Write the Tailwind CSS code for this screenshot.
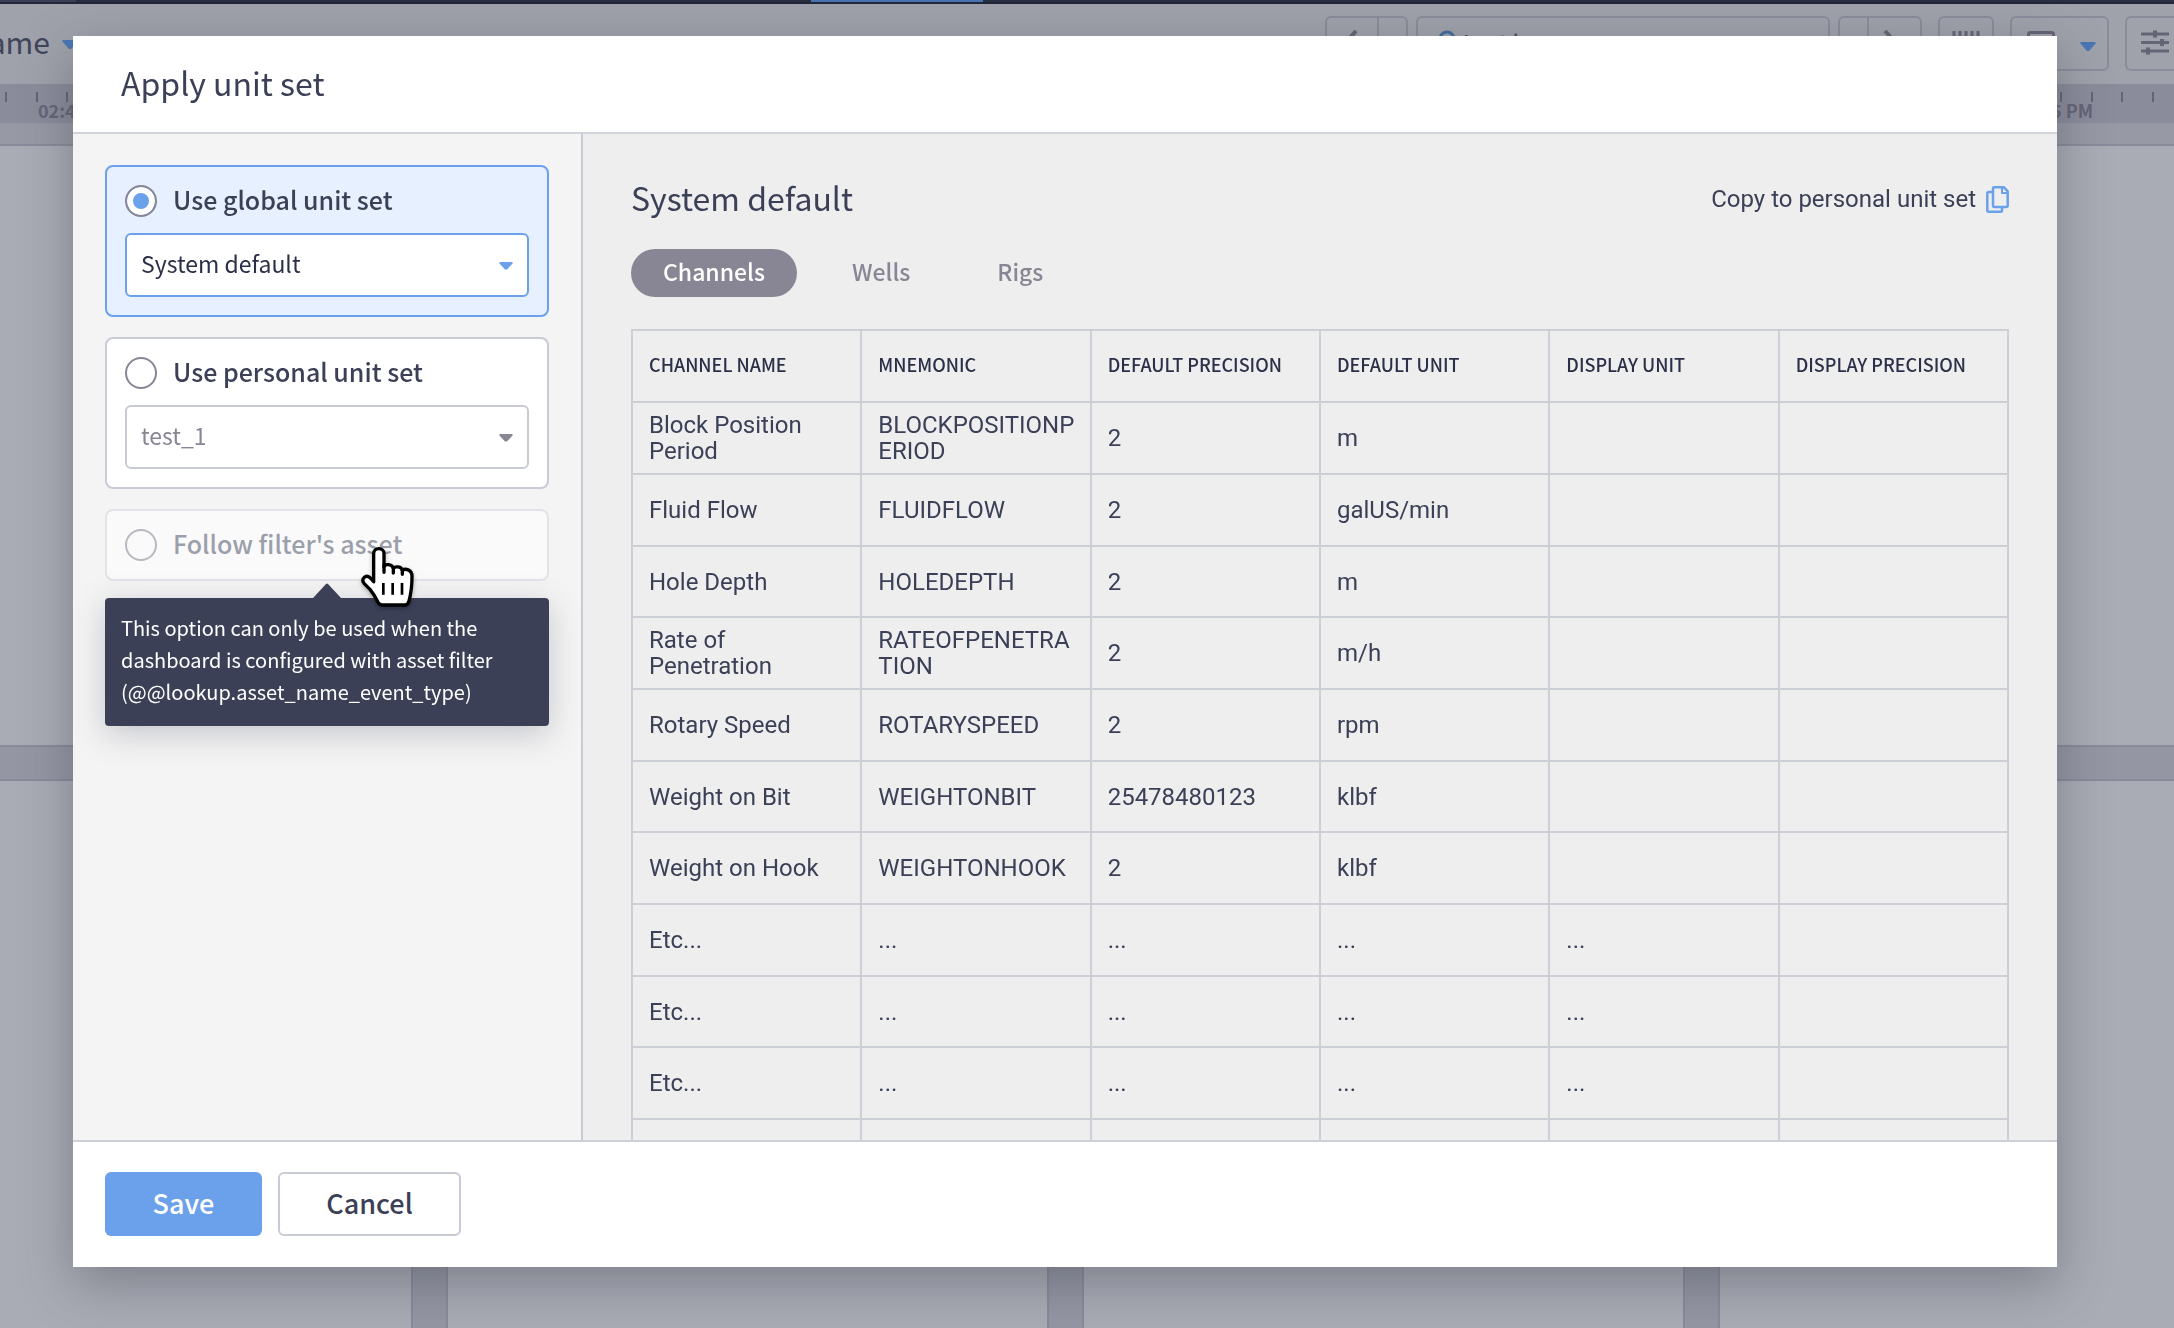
<!DOCTYPE html>
<html lang="en">
<head>
<meta charset="utf-8">
<title>Apply unit set</title>
<script src="https://cdn.jsdelivr.net/npm/@tailwindcss/browser@4"></script>
</head>
<body class="h-screen overflow-hidden bg-[#a9acb5] font-['Noto_Sans_CJK_SC',sans-serif] text-[#3b4057]">

<!-- Dimmed dashboard -->
<div class="flex h-screen flex-col" aria-hidden="true">
  <div class="flex h-1 shrink-0 border-b-2 border-[#23273c] bg-[#283040]">
    <div class="w-[76px] bg-[#3a4056]"></div>
    <div class="ml-[735px] w-[172px] bg-[#4a74b0]"></div>
  </div>
  <div class="flex h-20 shrink-0 items-start overflow-hidden bg-[#9fa2aa] pt-3 text-[#646476]">
    <div class="flex w-[50px] justify-end text-[30px] leading-[50px] whitespace-nowrap text-[#3f455a]">Dashboard name</div>
    <svg class="mt-6 ml-3 h-[9px] w-4 shrink-0" viewBox="0 0 16 9" fill="#4a76b4"><path d="M1 0h14l1 1-7 8H7L0 1z"/></svg>
    <div class="ml-auto flex h-[55px] shrink-0">
      <div class="flex w-[83px] rounded-md border-2 border-[#8a8c9b]">
        <div class="flex w-[52px] justify-center border-r-2 border-[#8a8c9b] pt-3"><svg class="h-6 w-6" viewBox="0 0 24 24" fill="none" stroke="currentColor" stroke-width="4"><path d="M16 1 6 12l10 11"/></svg></div>
      </div>
      <div class="ml-2 flex w-[414px] rounded-md border-2 border-[#8a8c9b] pl-[21px] text-[23px] leading-[48px]">
        <svg class="mt-3 mr-2 h-6 w-4" viewBox="0 0 16 24" fill="none" stroke="#3f6c9e" stroke-width="3"><circle cx="8" cy="9" r="7"/></svg>
        <span class="text-[#3f455a]">Last hour</span>
      </div>
      <div class="ml-2 flex w-[84px] rounded-md border-2 border-[#8a8c9b]">
        <div class="w-[29px] border-r-2 border-[#8a8c9b]"></div>
        <svg class="mt-3 ml-2 h-6 w-6" viewBox="0 0 24 24" fill="none" stroke="currentColor" stroke-width="4"><path d="m8 1 10 11L8 23"/></svg>
      </div>
      <div class="ml-4 flex w-14 justify-center rounded-md border-2 border-[#8a8c9b] pt-[13px]"><svg class="h-6 w-7" viewBox="0 0 28 24" stroke="currentColor" stroke-width="3"><path d="M2 0v20M8 0v20M14 0v20M20 0v20M26 0v20"/></svg></div>
      <div class="ml-4 flex w-[99px] justify-between rounded-md border-2 border-[#8a8c9b] pr-[11px] pl-[15px]">
        <svg class="mt-[13px] h-6 w-7" viewBox="0 0 28 24" fill="none" stroke="currentColor" stroke-width="3"><rect x="1.500" y="1.500" width="25" height="18" rx="2"/></svg>
        <svg class="mt-6 h-[9px] w-4" viewBox="0 0 16 9" fill="#4a76b4"><path d="M1 0h14l1 1-7 8H7L0 1z"/></svg>
      </div>
      <div class="ml-4 flex w-[49px] rounded-l-md border-2 border-r-0 border-[#8a8c9b] pt-3 pl-[14px]"><svg class="h-[25px] w-7 shrink-0" viewBox="0 0 28 25" stroke="currentColor" stroke-width="3"><path d="M0 4h28M0 12.500h28M0 21h28"/><path stroke-width="4" d="M14 0.500v7M21 9v7M7 17.500v7"/></svg></div>
    </div>
  </div>
  <div class="h-[39px] shrink-0 overflow-hidden bg-[#8a8c9b] pt-2 text-[#646476]">
    <div id="ticks" class="flex justify-between pr-[19px] pl-[5px]"></div>
    <div class="flex justify-between pr-[81px] pl-[38px] text-[18px] leading-4 font-bold"><span>02:45 PM</span><span>03:15 PM</span></div>
  </div>
  <div class="h-[23px] shrink-0 border-b-2 border-[#898b9b] bg-[#979aa5]"></div>
  <div class="h-[599px] shrink-0"></div>
  <div class="h-9 shrink-0 border-y-2 border-[#898b9b] bg-[#9496a4]"></div>
  <div class="flex flex-1">
    <div class="w-[411px]"></div>
    <div class="w-[37px] border-x-2 border-[#898b9b] bg-[#9496a4]"></div>
    <div class="w-[599px]"></div>
    <div class="w-[37px] border-x-2 border-[#898b9b] bg-[#9496a4]"></div>
    <div class="w-[599px]"></div>
    <div class="w-[37px] border-x-2 border-[#898b9b] bg-[#9496a4]"></div>
  </div>
</div>

<!-- Dialog -->
<div class="fixed inset-0 flex pt-9 pr-[117px] pb-[61px] pl-[73px]">
  <div role="dialog" aria-labelledby="dialog-title" class="flex min-w-0 flex-1 flex-col bg-white shadow-[0_16px_48px_rgba(60,62,75,0.4)]">
    <header class="flex h-[98px] shrink-0 items-center border-b-2 border-[#d0d4da] px-12 pb-1">
      <h1 id="dialog-title" class="text-[32px] leading-10">Apply unit set</h1>
    </header>

    <div class="flex min-h-0 flex-1">
      <aside class="flex w-[510px] shrink-0 flex-col gap-5 border-r-2 border-[#c8ccd2] bg-[#f4f4f4] px-8 pt-[31px]">
        <section class="flex flex-col gap-4 rounded-lg border-2 border-[#6ba1ea] bg-[#e6f0ff] p-[18px]">
          <div class="flex items-center gap-4">
            <input id="global" type="radio" name="set" checked class="h-8 w-8 shrink-0 appearance-none rounded-full border-2 border-[#888694] bg-white checked:bg-[#6ba1ea] checked:shadow-[inset_0_0_0_6px_white]">
            <label for="global" class="h-8 text-[25px] leading-7 font-medium">Use global unit set</label>
          </div>
          <div class="relative">
            <select aria-label="Global unit set" class="block h-16 w-full appearance-none rounded-md border-2 border-[#6ba1ea] bg-white px-[14px] pb-1 text-[23px] text-[#2b3048]"><option>System default</option></select>
            <svg class="pointer-events-none absolute top-[29px] right-4 h-2 w-[14px]" viewBox="0 0 14 8" fill="#6ba1ea"><path d="M1 0h12l1 1-6 6.500H6L0 1z"/></svg>
          </div>
        </section>

        <section class="flex flex-col gap-4 rounded-lg border-2 border-[#c8cbd3] bg-white p-[18px]">
          <div class="flex items-center gap-4">
            <input id="personal" type="radio" name="set" class="h-8 w-8 shrink-0 appearance-none rounded-full border-2 border-[#888694] bg-white checked:bg-[#6ba1ea] checked:shadow-[inset_0_0_0_6px_white]">
            <label for="personal" class="h-8 text-[25px] leading-7 font-medium">Use personal unit set</label>
          </div>
          <div class="relative">
            <select aria-label="Personal unit set" class="block h-16 w-full appearance-none rounded-md border-2 border-[#c8cbd3] bg-white px-[14px] pb-1 text-[23px] text-[#888694]"><option>test_1</option></select>
            <svg class="pointer-events-none absolute top-[29px] right-4 h-2 w-[14px]" viewBox="0 0 14 8" fill="#888694"><path d="M1 0h12l1 1-6 6.500H6L0 1z"/></svg>
          </div>
        </section>

        <section class="relative rounded-lg border-2 border-[#e2e3e8] bg-[#fafafa] p-[18px]">
          <div class="flex items-center gap-4">
            <input id="asset" type="radio" name="set" disabled aria-describedby="asset-tip" class="h-8 w-8 shrink-0 appearance-none rounded-full border-2 border-[#b9b8c1] bg-[#fafafa]">
            <label for="asset" class="h-8 text-[25px] leading-7 font-medium text-[#9b9fab]">Follow filter's asset</label>
          </div>
          <div id="asset-tip" role="tooltip" class="absolute -inset-x-[2px] top-[87px] rounded bg-[#3b4057] px-4 pt-[14px] pb-[18px] text-[20px] leading-8 text-white shadow-[0_8px_32px_rgba(59,64,87,0.25)]">
            <svg class="absolute bottom-full left-1/2 -ml-[14px] h-[15px] w-7" viewBox="0 0 28 15" fill="#3b4057"><path d="M0 15 13 1q1-1 2 0l13 14z"/></svg>
            This option can only be used when the dashboard is configured with asset filter (@@lookup.asset_name_event_type)
          </div>
          <svg class="absolute top-[34px] left-[254px] h-[64px] w-[54px] drop-shadow-[0_2px_2px_rgba(0,0,0,0.3)]" viewBox="0 0 162 192" fill="#fff" stroke="#000" stroke-width="10" stroke-linejoin="round" stroke-linecap="round"><path d="M38 110V26c0-20 31-20 31 0v40c2-10 24-10 28 4 6-7 24-6 27 6 8-6 29-4 29 18 0 30-3 52-9 74-2 8-5 12-13 12H63c-6 0-9-2-12-8-8-17-14-27-24-39L9 115c-10-14 6-28 18-17z"/><path d="M69 60v22M97 68v16M124 74v14"/><path stroke-linecap="butt" stroke-width="8" d="M67 114v35M95 114v35M123 114v35"/></svg>
        </section>
      </aside>

      <main class="min-w-0 flex-1 overflow-hidden bg-[#eee] px-12 pt-[43px]">
        <div class="flex h-11 items-center justify-between">
          <h2 class="pb-1 text-[32px] leading-10">System default</h2>
          <a href="#" class="flex items-center gap-[10px] font-['Roboto',sans-serif] text-[24px] leading-7">Copy to personal unit set
            <svg class="h-[27px] w-[23px]" viewBox="0 0 23 27" fill="none" stroke="#6ba1ea" stroke-width="2.500" stroke-linejoin="round"><path d="M7 6H2.500Q1.300 6 1.300 7.500v17Q1.300 25.700 2.500 25.700H14.500Q16 25.700 16 24.500V21"/><path d="M8.500 1.300H18l3.700 4v14.200q0 1.500-1.500 1.500H8.500Q7 21 7 19.500V2.500Q7 1.300 8.500 1.300z"/><path stroke-width="2" d="M16 1v6h6"/></svg>
          </a>
        </div>
        <div class="mt-7 flex gap-[23px] text-[23px] leading-10 font-medium text-[#888694]" role="tablist">
          <button role="tab" aria-selected="true" class="h-12 rounded-full bg-[#888694] px-8 pb-1 text-white">Channels</button>
          <button role="tab" class="h-12 rounded-full px-8 pb-1">Wells</button>
          <button role="tab" class="h-12 rounded-full px-8 pb-1">Rigs</button>
        </div>
        <table class="mt-8 w-full table-fixed border-collapse text-left font-['Roboto',sans-serif] text-[24px] leading-[26px] [&_td]:border-2 [&_td]:border-[#cccfd6] [&_td]:py-0 [&_td]:pr-3 [&_td]:pl-4 [&_td]:break-words [&_th]:border-2 [&_th]:border-[#cccfd6] [&_th]:pr-3 [&_th]:pb-1 [&_th]:pl-4 [&_tr]:h-[72px] [&_tr:nth-child(3n)]:h-[71px]">
          <thead>
            <tr class="font-['Noto_Sans_CJK_SC',sans-serif] text-[18px] text-[#2b3048] [&_th]:font-medium"><th>CHANNEL NAME</th><th>MNEMONIC</th><th>DEFAULT PRECISION</th><th>DEFAULT UNIT</th><th>DISPLAY UNIT</th><th>DISPLAY PRECISION</th></tr>
          </thead>
          <tbody>
            <tr><td>Block Position Period</td><td>BLOCKPOSITIONPERIOD</td><td>2</td><td>m</td><td></td><td></td></tr>
            <tr><td>Fluid Flow</td><td>FLUIDFLOW</td><td>2</td><td>galUS/min</td><td></td><td></td></tr>
            <tr><td>Hole Depth</td><td>HOLEDEPTH</td><td>2</td><td>m</td><td></td><td></td></tr>
            <tr><td>Rate of Penetration</td><td>RATEOFPENETRATION</td><td>2</td><td>m/h</td><td></td><td></td></tr>
            <tr><td>Rotary Speed</td><td>ROTARYSPEED</td><td>2</td><td>rpm</td><td></td><td></td></tr>
            <tr><td>Weight on Bit</td><td>WEIGHTONBIT</td><td>25478480123</td><td>klbf</td><td></td><td></td></tr>
            <tr><td>Weight on Hook</td><td>WEIGHTONHOOK</td><td>2</td><td>klbf</td><td></td><td></td></tr>
            <tr><td>Etc...</td><td>...</td><td>...</td><td>...</td><td>...</td><td></td></tr>
            <tr><td>Etc...</td><td>...</td><td>...</td><td>...</td><td>...</td><td></td></tr>
            <tr><td>Etc...</td><td>...</td><td>...</td><td>...</td><td>...</td><td></td></tr>
            <tr><td></td><td></td><td></td><td></td><td></td><td></td></tr>
          </tbody>
        </table>
      </main>
    </div>

    <footer class="flex h-[127px] shrink-0 gap-4 border-t-2 border-[#cdd0d8] px-8 pt-[30px] text-[27px] leading-10 font-medium">
      <button class="h-16 w-[157px] rounded-md bg-[#6ba1ea] pb-[2px] text-white">Save</button>
      <button class="h-16 w-[183px] rounded-md border-2 border-[#c8cbd3] bg-white pb-[2px]">Cancel</button>
    </footer>
  </div>
</div>

<script>
  document.getElementById('ticks').innerHTML = '<i class="h-[10px] w-[2px] bg-[#646476]"></i>'.repeat(71);
</script>
</body>
</html>
